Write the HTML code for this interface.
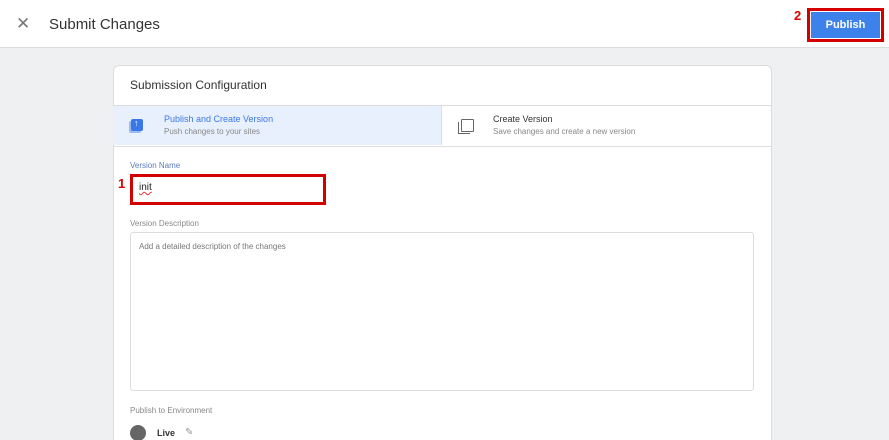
<html style="overflow:hidden;height:440px"><head><style>
body{margin:0;width:889px;height:440px;overflow:hidden;background:#eff0f1;font-family:"Liberation Sans",sans-serif;position:relative}
.hdr{position:absolute;left:0;top:0;width:889px;height:47px;background:#fff;border-bottom:1px solid #dcdcdc}
.a{position:absolute}
</style></head><body>
<div class="hdr">
<div class="a" style="left:16px;top:14px;font-size:17px;color:#777">✕</div>
<div class="a" style="left:49px;top:16px;font-size:15px;color:#333">Submit Changes</div>
<div class="a" style="left:794px;top:8px;font-size:13px;font-weight:bold;color:#d00">2</div>
<div class="a" style="left:807px;top:8px;width:71px;height:28px;border:3px solid #d40000;background:#fff"></div>
<div class="a" style="left:811px;top:12px;width:69px;height:26px;background:#3d82ea;color:#fff;font-size:11px;font-weight:bold;text-align:center;line-height:26px">Publish</div>
</div>
<div class="a" style="left:113px;top:65px;width:657px;height:380px;background:#fff;border:1px solid #dcdcdc;border-bottom:none;border-radius:6px 6px 0 0"></div>
<div class="a" style="left:130px;top:78px;font-size:12px;color:#333">Submission Configuration</div>
<div class="a" style="left:113px;top:105px;width:658px;height:40px;border-top:1px solid #ddd;border-bottom:1px solid #ddd"></div>
<div class="a" style="left:113px;top:106px;width:328px;height:39px;background:#e8f0fe;border-right:1px solid #ddd"></div>
<div class="a" style="left:131px;top:119px;width:12px;height:12px;background:#3b78e7;border-radius:2px;box-shadow:-2px 2px 0 #9bb8f0"></div>
<div class="a" style="left:134px;top:118px;font-size:9px;color:#fff;font-weight:bold">↑</div>
<div class="a" style="left:164px;top:114px;font-size:9px;color:#3b78e7">Publish and Create Version</div>
<div class="a" style="left:164px;top:127px;font-size:8px;color:#888">Push changes to your sites</div>
<div class="a" style="left:461px;top:119px;width:11px;height:11px;border:1.5px solid #666;border-radius:1px"></div>
<div class="a" style="left:458px;top:122px;width:11px;height:11px;border-left:1.5px solid #666;border-bottom:1.5px solid #666"></div>
<div class="a" style="left:493px;top:114px;font-size:9px;color:#333">Create Version</div>
<div class="a" style="left:493px;top:127px;font-size:8px;color:#888">Save changes and create a new version</div>
<div class="a" style="left:130px;top:161px;font-size:8px;color:#5a7bb8">Version Name</div>
<div class="a" style="left:118px;top:176px;font-size:13px;font-weight:bold;color:#d00">1</div>
<div class="a" style="left:130px;top:174px;width:190px;height:25px;border:3px solid #d40000"></div>
<div class="a" style="left:139px;top:182px;font-size:10px;color:#222;text-decoration:underline wavy #e33">init</div>
<div class="a" style="left:130px;top:219px;font-size:8px;color:#888">Version Description</div>
<div class="a" style="left:130px;top:232px;width:622px;height:157px;border:1px solid #ddd;border-radius:3px"></div>
<div class="a" style="left:139px;top:242px;font-size:8px;color:#777">Add a detailed description of the changes</div>
<div class="a" style="left:130px;top:406px;font-size:8px;color:#888">Publish to Environment</div>
<div class="a" style="left:130px;top:425px;width:16px;height:16px;border-radius:50%;background:#666"></div>
<div class="a" style="left:157px;top:428px;font-size:9px;font-weight:bold;color:#333">Live</div>
<div class="a" style="left:185px;top:427px;font-size:10px;color:#999">✎</div>
</body></html>
